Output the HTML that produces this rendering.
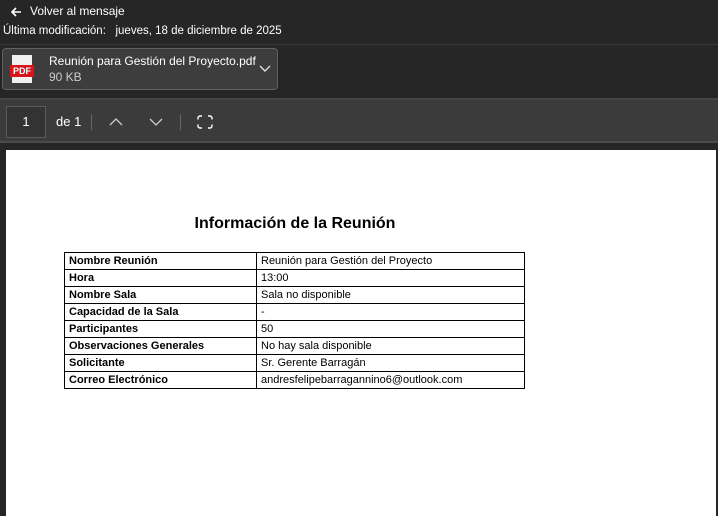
<!DOCTYPE html>
<html><head><meta charset="utf-8"><style>
*{margin:0;padding:0;box-sizing:border-box}
body{width:718px;height:516px;overflow:hidden;background:#262626;font-family:"Segoe UI","Liberation Sans",sans-serif;color:#fff;position:relative}
.a{position:absolute}
table{border-collapse:collapse;font-family:"Liberation Sans",sans-serif;font-size:11px;color:#000}
td{border:1.5px solid #000;height:17px;padding:0 4px;line-height:14px;white-space:nowrap}
td:first-child{font-weight:bold;width:192px}
</style></head><body>
<svg class="a" style="left:10px;top:6px" width="12" height="12" viewBox="0 0 12 12"><path d="M11 6H2M6 2L2 6l4 4" stroke="#fff" stroke-width="1.6" fill="none"/></svg>
<div class="a" style="left:30px;top:4px;font-size:12px">Volver al mensaje</div>
<div class="a" style="left:3px;top:25px;font-size:11.5px">Última modificación:&nbsp;&nbsp; jueves, 18 de diciembre de 2025</div>
<div class="a" style="left:0;top:44px;width:718px;height:1px;background:#3a3a3a"></div>
<div class="a" style="left:2px;top:48px;width:276px;height:42px;background:#3d3d3d;border:1px solid #606060;border-radius:4px"></div>
<div class="a" style="left:12px;top:55px;width:20px;height:28px;background:#f0f0f0"></div>
<div class="a" style="left:10px;top:65px;width:24px;height:12px;background:#d9131c;font:bold 9px 'Liberation Sans',sans-serif;text-align:center;line-height:12px">PDF</div>
<div class="a" style="left:49px;top:54px;font-size:12px">Reunión para Gestión del Proyecto.pdf</div>
<div class="a" style="left:49px;top:70px;font-size:12px;color:#ccc">90 KB</div>
<svg class="a" style="left:259px;top:65px" width="12" height="8"><path d="M1 1l5 5 5-5" stroke="#ddd" stroke-width="1.4" fill="none"/></svg>
<div class="a" style="left:0;top:98px;width:718px;height:2px;background:#444"></div>
<div class="a" style="left:0;top:100px;width:718px;height:43px;background:#3b3b3b;border-bottom:2px solid #4a4a4a"></div>
<div class="a" style="left:6px;top:106px;width:40px;height:32px;border:1px solid #5a5a5a;background:#333;font-size:13px;text-align:center;line-height:30px">1</div>
<div class="a" style="left:56px;top:114px;font-size:13px">de 1</div>
<div class="a" style="left:91px;top:114px;width:1px;height:16px;background:#666"></div>
<svg class="a" style="left:109px;top:117px" width="14" height="9"><path d="M1 8l6-6 6 6" stroke="#ccc" stroke-width="1.3" fill="none"/></svg>
<svg class="a" style="left:149px;top:118px" width="14" height="9"><path d="M1 1l6 6 6-6" stroke="#ccc" stroke-width="1.3" fill="none"/></svg>
<div class="a" style="left:180px;top:114px;width:1px;height:16px;background:#666"></div>
<svg class="a" style="left:197px;top:115px" width="16" height="14"><rect x="1" y="1" width="14" height="12" rx="2" stroke="#fff" stroke-width="1.4" fill="none"/><path d="M5 1h6M5 13h6M1 4.5v5M15 4.5v5" stroke="#3b3b3b" stroke-width="2"/></svg>
<div class="a" style="left:6px;top:150px;width:710px;height:366px;background:#fff"></div>
<div class="a" style="left:6px;top:215px;width:578px;text-align:center;font:bold 16px 'Liberation Sans',sans-serif;color:#000">Información de la Reunión</div>
<table class="a" style="left:64px;top:252px;width:461px">
<tr><td>Nombre Reunión</td><td>Reunión para Gestión del Proyecto</td></tr>
<tr><td>Hora</td><td>13:00</td></tr>
<tr><td>Nombre Sala</td><td>Sala no disponible</td></tr>
<tr><td>Capacidad de la Sala</td><td>-</td></tr>
<tr><td>Participantes</td><td>50</td></tr>
<tr><td>Observaciones Generales</td><td>No hay sala disponible</td></tr>
<tr><td>Solicitante</td><td>Sr. Gerente Barragán</td></tr>
<tr><td>Correo Electrónico</td><td>andresfelipebarragannino6@outlook.com</td></tr>
</table>
</body></html>
